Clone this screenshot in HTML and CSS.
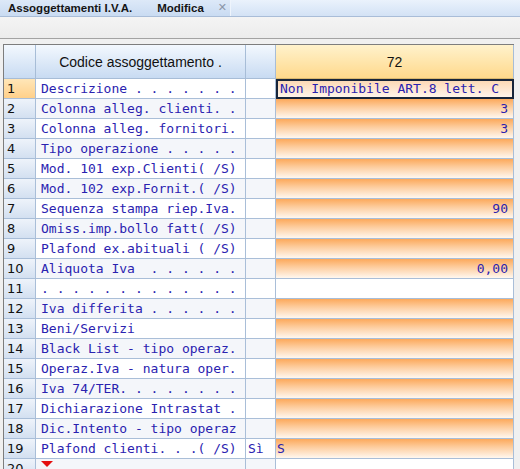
FILE: index.html
```html
<!DOCTYPE html>
<html>
<head>
<meta charset="utf-8">
<link rel="stylesheet" href="styles.css">
</head>
<body>
<div class="tabbar">
  <div class="tab">
    <span class="tab-title">Assoggettamenti I.V.A.</span>
    <span class="tab-mode">Modifica</span>
    <span class="tab-close">✕</span>
  </div>
  <div class="tab-rest"></div>
</div>
<div class="toolbar"></div>
<div class="frame">
  <div class="grid">
    <div class="hd hd-num"></div>
    <div class="hd hd-label">Codice assoggettamento .</div>
    <div class="hd hd-extra"></div>
    <div class="hd hd-value">72</div>

    <div class="c num sel">1</div><div class="c lab">Descrizione . . . . . . .</div><div class="c ext"></div><div class="c val active">Non Imponibile ART.8 lett. C</div>
    <div class="c num">2</div><div class="c lab even">Colonna alleg. clienti. .</div><div class="c ext even"></div><div class="c val r">3</div>
    <div class="c num">3</div><div class="c lab">Colonna alleg. fornitori.</div><div class="c ext"></div><div class="c val r">3</div>
    <div class="c num">4</div><div class="c lab even">Tipo operazione . . . . .</div><div class="c ext even"></div><div class="c val"></div>
    <div class="c num">5</div><div class="c lab">Mod. 101 exp.Clienti( /S)</div><div class="c ext"></div><div class="c val"></div>
    <div class="c num">6</div><div class="c lab even">Mod. 102 exp.Fornit.( /S)</div><div class="c ext even"></div><div class="c val"></div>
    <div class="c num">7</div><div class="c lab">Sequenza stampa riep.Iva.</div><div class="c ext"></div><div class="c val r">90</div>
    <div class="c num">8</div><div class="c lab even">Omiss.imp.bollo fatt( /S)</div><div class="c ext even"></div><div class="c val"></div>
    <div class="c num">9</div><div class="c lab">Plafond ex.abituali ( /S)</div><div class="c ext"></div><div class="c val"></div>
    <div class="c num">10</div><div class="c lab even">Aliquota Iva  . . . . . .</div><div class="c ext even"></div><div class="c val r">0,00</div>
    <div class="c num">11</div><div class="c lab">. . . . . . . . . . . . .</div><div class="c ext"></div><div class="c val plain"></div>
    <div class="c num">12</div><div class="c lab even">Iva differita . . . . . .</div><div class="c ext even"></div><div class="c val"></div>
    <div class="c num">13</div><div class="c lab">Beni/Servizi</div><div class="c ext"></div><div class="c val"></div>
    <div class="c num">14</div><div class="c lab even">Black List - tipo operaz.</div><div class="c ext even"></div><div class="c val"></div>
    <div class="c num">15</div><div class="c lab">Operaz.Iva - natura oper.</div><div class="c ext"></div><div class="c val"></div>
    <div class="c num">16</div><div class="c lab even">Iva 74/TER. . . . . . . .</div><div class="c ext even"></div><div class="c val"></div>
    <div class="c num">17</div><div class="c lab">Dichiarazione Intrastat .</div><div class="c ext"></div><div class="c val"></div>
    <div class="c num">18</div><div class="c lab even">Dic.Intento - tipo operaz</div><div class="c ext even"></div><div class="c val"></div>
    <div class="c num">19</div><div class="c lab">Plafond clienti. . .( /S)</div><div class="c ext">Sì</div><div class="c val">S</div>
    <div class="c num">20</div><div class="c lab even"><span class="more"></span></div><div class="c ext even"></div><div class="c val plain"></div>
  </div>
</div>
</body>
</html>
```

FILE: styles.css
```css
html, body {
  margin: 0;
  padding: 0;
}
body {
  width: 520px;
  height: 469px;
  overflow: hidden;
  background: #f0f0f0;
  font-family: "Liberation Sans", Arial, sans-serif;
}
.tabbar {
  display: flex;
  height: 16px;
  border-bottom: 1px solid #a9bdd8;
  background: linear-gradient(#dde9f8, #c9dbf2);
}
.tab {
  width: 231px;
  flex-shrink: 0;
  display: flex;
  align-items: center;
  border-right: 1px solid #eef4fc;
  box-sizing: border-box;
  font-size: 11.5px;
  font-weight: bold;
  color: #141414;
  line-height: 16px;
  white-space: nowrap;
}
.tab-title { margin-left: 8px; }
.tab-mode { margin-left: 25px; }
.tab-close {
  margin-left: 14px;
  font-weight: normal;
  color: #8a96a8;
  font-size: 11px;
  font-family: "DejaVu Sans", sans-serif;
}
.tab-rest {
  flex: 1;
  background: linear-gradient(#eaf2fc, #d3e2f5);
}
.toolbar {
  height: 21px;
  background: linear-gradient(#f4f4f4, #ececec);
  border-bottom: 1px solid #a3a3a3;
}
.frame {
  padding: 5px 0 0 3px;
}
.grid {
  display: grid;
  grid-template-columns: 32px 210px 30px 238px;
  grid-auto-rows: 20px;
  grid-template-rows: 34px;
  width: 511px;
  border-left: 1px solid #7d7d7d;
  border-top: 1px solid #7d7d7d;
  background: #fff;
  box-sizing: border-box;
}
.hd {
  border-right: 1px solid #a7bdd7;
  border-bottom: 1px solid #a7bdd7;
  display: flex;
  align-items: center;
  justify-content: center;
  font-size: 14px;
  color: #111;
}
.hd-num, .hd-label, .hd-extra {
  background: linear-gradient(#f3f8fe, #c8dbf2);
}
.hd-value {
  background: linear-gradient(#fff2cc, #ffd98c);
  border-bottom-color: #d9b870;
}
.c {
  border-right: 1px solid #a9bed8;
  border-bottom: 1px solid #a9bed8;
  box-sizing: border-box;
  line-height: 19px;
  white-space: pre;
  overflow: hidden;
}
.num {
  font-family: "DejaVu Sans", Verdana, sans-serif;
  font-size: 13px;
  color: #111;
  padding-left: 3px;
  background: linear-gradient(#eef3fa, #d3e0f1);
}
.num.sel {
  background: linear-gradient(#ffe6b8, #ffd08a);
}
.lab, .ext, .val {
  font-family: "DejaVu Sans Mono", "Liberation Mono", monospace;
  font-size: 13px;
  color: #2a22b0;
}
.lab {
  padding-left: 5px;
  background: #fff;
}
.ext {
  padding-left: 2px;
  background: #fff;
}
.even {
  background: #f4f6fa;
}
.val {
  padding: 0 5px 0 1px;
  background: linear-gradient(#fca95b 0%, #fdcb9a 40%, #fff7ef 100%);
}
.val.r {
  text-align: right;
}
.val.plain {
  background: #fff;
}
.val.active {
  border: 2px solid #18253a;
  padding-left: 2px;
  line-height: 16px;
  background: linear-gradient(#fcd9b6, #fff4ea);
}
.more {
  display: inline-block;
  width: 0;
  height: 0;
  margin-top: 2px;
  vertical-align: top;
  border-left: 6px solid transparent;
  border-right: 6px solid transparent;
  border-top: 6px solid #e40f0f;
}
```
